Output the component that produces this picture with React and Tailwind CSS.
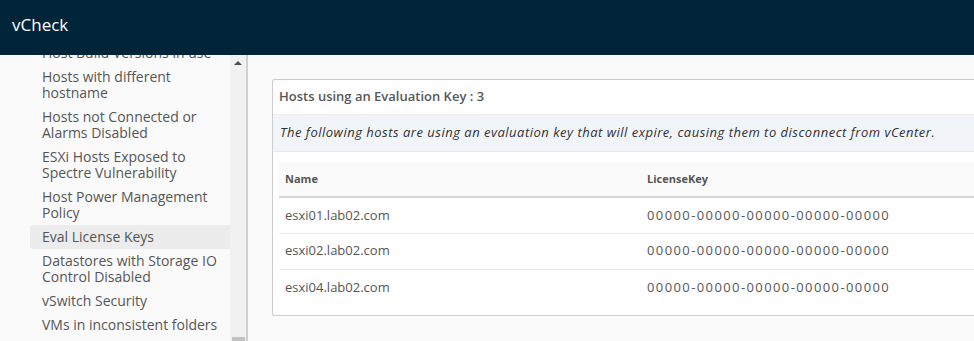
import React from "react";

const navItems = [
  ["Host Build Versions in use"],
  ["Hosts with different", "hostname"],
  ["Hosts not Connected or", "Alarms Disabled"],
  ["ESXi Hosts Exposed to", "Spectre Vulnerability"],
  ["Host Power Management", "Policy"],
  ["Eval License Keys"],
  ["Datastores with Storage IO", "Control Disabled"],
  ["vSwitch Security"],
  ["VMs in inconsistent folders"],
];

const hosts = [
  { name: "esxi01.lab02.com", key: "00000-00000-00000-00000-00000" },
  { name: "esxi02.lab02.com", key: "00000-00000-00000-00000-00000" },
  { name: "esxi04.lab02.com", key: "00000-00000-00000-00000-00000" },
];

function Sidebar() {
  return (
    <div className="flex h-full shrink-0">
      <div className="w-[230px] bg-[#fafafa] overflow-hidden">
        <ul className="-mt-[14px] ml-[30px]">
          {navItems.map((lines, i) => {
            const active = lines[0] === "Eval License Keys";
            return (
              <li
                key={i}
                className={
                  "py-1 pl-3 text-[14px] leading-4 text-[#565656] whitespace-nowrap rounded-l-[3px] " +
                  (active ? "bg-[#ececec]" : "")
                }
              >
                {lines.map((l) => (
                  <div key={l}>{l}</div>
                ))}
              </li>
            );
          })}
        </ul>
      </div>
      <div className="w-4 bg-[#f1f1f1] flex flex-col items-center justify-between">
        <div className="mt-[6px] w-0 h-0 border-l-[4px] border-r-[4px] border-b-[4px] border-l-transparent border-r-transparent border-b-[#505050]" />
        <div className="w-[13px] h-[4px] bg-[#c1c1c1]" />
      </div>
      <div className="w-[2px] bg-[#d0d0d0]" />
    </div>
  );
}

function Card() {
  return (
    <div className="bg-white border border-[#cccccc] rounded-[3px] border-r-0 rounded-r-none">
      <div className="h-[35px] flex items-center px-[6px] border-b border-[#eeeeee]">
        <span className="text-[13px] font-semibold text-[#575757]">
          Hosts using an Evaluation Key : 3
        </span>
      </div>
      <div className="h-[37px] flex items-center px-[7px] bg-[#f1f5fa] border-b border-[#e8e8e8]">
        <span className="text-[13px] italic text-[#313131] whitespace-nowrap tracking-[0.5px]">
          The following hosts are using an evaluation key that will expire, causing them to disconnect from vCenter.
        </span>
      </div>
      <div className="pt-[10px] pb-[10px] pl-[6px]">
        <table className="w-full border-collapse text-left">
          <thead>
            <tr className="bg-[#fafafa] border-b-2 border-[#d4d4d4] h-[35px]">
              <th className="w-[362px] pl-[6px] text-[11px] font-bold text-[#565656]">Name</th>
              <th className="pl-[6px] text-[11px] font-bold text-[#565656]">LicenseKey</th>
            </tr>
          </thead>
          <tbody>
            {hosts.map((h, i) => (
              <tr key={h.name} className={"h-[36px] " + (i < hosts.length - 1 ? "border-b border-[#ebebeb]" : "")}>
                <td className="pl-[6px] text-[13px] text-[#565656]">{h.name}</td>
                <td className="pl-[6px] text-[13px] text-[#565656] tracking-[1.4px] whitespace-nowrap">{h.key}</td>
              </tr>
            ))}
          </tbody>
        </table>
      </div>
    </div>
  );
}

export default function App() {
  return (
    <div className="h-[341px] w-[974px] flex flex-col overflow-hidden font-['Open_Sans',sans-serif]">
      <header className="h-[55px] shrink-0 bg-[#002538] flex items-start pl-3 pt-[12px]">
        <span className="text-white text-[17px]">vCheck</span>
      </header>
      <div className="flex flex-1 min-h-0">
        <Sidebar />
        <main className="flex-1 bg-[#fafafa] pt-6 pl-6 overflow-hidden">
          <Card />
        </main>
      </div>
    </div>
  );
}
